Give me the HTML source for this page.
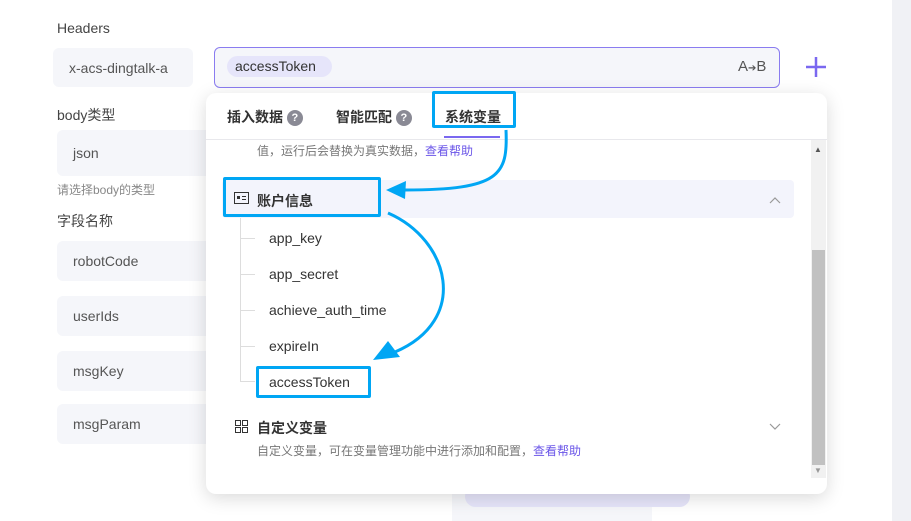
<!DOCTYPE html>
<html><head><meta charset="utf-8"><style>
*{box-sizing:border-box;margin:0;padding:0}
body{width:911px;height:521px;overflow:hidden;background:#fff;font-family:"Liberation Sans","Noto Sans CJK SC",sans-serif;position:relative;color:#333}
.a{position:absolute}
.lbl{font-size:14px;color:#444}
.box{background:#f5f6fa;border-radius:6px;font-size:14px;color:#555;padding-left:16px;display:flex;align-items:center}
.item{position:absolute;left:269px;font-size:14px;color:#333}
.tick{position:absolute;left:241px;width:14px;height:1px;background:#ddd}
</style></head><body>
<div class="a" style="left:892px;top:0;width:19px;height:521px;background:#f0f1f5"></div>
<div class="a lbl" style="left:57px;top:20px">Headers</div>
<div class="a box" style="left:53px;top:48px;width:140px;height:39px;font-size:14px">x-acs-dingtalk-a</div>
<div class="a" style="left:214px;top:47px;width:566px;height:41px;border:1px solid #8a7cf0;border-radius:6px;background:#f5f6fa"></div>
<div class="a" style="left:227px;top:56px;width:105px;height:21px;border-radius:11px;background:#e6e5fa;font-size:14px;color:#333;padding-left:8px;line-height:21px">accessToken</div>
<div class="a" style="left:738px;top:58px;font-size:15px;color:#555">A<span style="font-size:10px">➔</span>B</div>
<svg class="a" style="left:805px;top:56px" width="22" height="22"><path d="M11 1V21M1 11H21" stroke="#7a68f0" stroke-width="2.5"/></svg>
<div class="a lbl" style="left:57px;top:105px">body类型</div>
<div class="a box" style="left:57px;top:130px;width:160px;height:46px">json</div>
<div class="a" style="left:57px;top:181px;font-size:12px;color:#888">请选择body的类型</div>
<div class="a lbl" style="left:57px;top:211px">字段名称</div>
<div class="a box" style="left:57px;top:241px;width:160px;height:40px">robotCode</div>
<div class="a box" style="left:57px;top:296px;width:160px;height:40px">userIds</div>
<div class="a box" style="left:57px;top:351px;width:160px;height:40px">msgKey</div>
<div class="a box" style="left:57px;top:404px;width:160px;height:40px">msgParam</div>
<div class="a" style="left:452px;top:494px;width:200px;height:27px;background:#f5f6fa"></div>
<div class="a" style="left:465px;top:486px;width:225px;height:21px;border-radius:11px;background:#e6e5fa"></div>
<!-- popup -->
<div class="a" style="left:206px;top:93px;width:621px;height:401px;background:#fff;border-radius:10px;box-shadow:0 4px 18px rgba(0,0,0,.15)">
</div>
<div class="a" style="left:206px;top:139px;width:621px;height:1px;background:#e8e8ec"></div>
<div class="a" style="left:227px;top:107px;font-size:14px;font-weight:bold;color:#333">插入数据 <span style="display:inline-block;width:16px;height:16px;border-radius:50%;background:#8a8a95;color:#fff;font-size:11px;text-align:center;line-height:16px;vertical-align:1px">?</span></div>
<div class="a" style="left:336px;top:107px;font-size:14px;font-weight:bold;color:#333">智能匹配 <span style="display:inline-block;width:16px;height:16px;border-radius:50%;background:#8a8a95;color:#fff;font-size:11px;text-align:center;line-height:16px;vertical-align:1px">?</span></div>
<div class="a" style="left:445px;top:107px;font-size:14px;font-weight:bold;color:#333">系统变量</div>
<div class="a" style="left:444px;top:136px;width:56px;height:2px;background:#7a68f0"></div>
<div class="a" style="left:257px;top:142px;font-size:12px;color:#777">值，运行后会替换为真实数据，<span style="color:#6a55e8">查看帮助</span></div>
<div class="a" style="left:811px;top:140px;width:15px;height:338px;background:#f1f1f1"></div>
<div class="a" style="left:812px;top:250px;width:13px;height:215px;background:#c1c1c1"></div>
<div class="a" style="left:814px;top:145px;font-size:8px;color:#555">▲</div>
<div class="a" style="left:814px;top:466px;font-size:8px;color:#999">▼</div>
<div class="a" style="left:222px;top:180px;width:572px;height:38px;background:#f3f4fc;border-radius:4px"></div>
<svg class="a" style="left:234px;top:192px" width="15" height="12"><rect x="0.5" y="0.5" width="14" height="11" fill="none" stroke="#333"/><rect x="3" y="4" width="3" height="3" fill="#333"/><line x1="8" y1="4.5" x2="12" y2="4.5" stroke="#333"/><line x1="8" y1="7.5" x2="12" y2="7.5" stroke="#333"/></svg>
<div class="a" style="left:257px;top:191px;font-size:14px;font-weight:bold;color:#333">账户信息</div>
<svg class="a" style="left:769px;top:196px" width="12" height="8"><path d="M1 7L6 2L11 7" fill="none" stroke="#999" stroke-width="1.2"/></svg>
<div class="a" style="left:240px;top:218px;width:1px;height:164px;background:#ddd"></div>
<div class="tick" style="top:238px"></div><div class="tick" style="top:274px"></div><div class="tick" style="top:310px"></div><div class="tick" style="top:346px"></div><div class="tick" style="top:381px"></div>
<div class="item" style="top:230px">app_key</div>
<div class="item" style="top:266px">app_secret</div>
<div class="item" style="top:302px">achieve_auth_time</div>
<div class="item" style="top:338px">expireIn</div>
<div class="item" style="top:374px">accessToken</div>
<svg class="a" style="left:235px;top:420px" width="13" height="13"><rect x="0.5" y="0.5" width="5" height="5" fill="none" stroke="#333"/><rect x="7.5" y="0.5" width="5" height="5" fill="none" stroke="#333"/><rect x="0.5" y="7.5" width="5" height="5" fill="none" stroke="#333"/><rect x="7.5" y="7.5" width="5" height="5" fill="none" stroke="#333"/></svg>
<div class="a" style="left:257px;top:418px;font-size:14px;font-weight:bold;color:#333">自定义变量</div>
<svg class="a" style="left:769px;top:423px" width="12" height="8"><path d="M1 1L6 6L11 1" fill="none" stroke="#999" stroke-width="1.2"/></svg>
<div class="a" style="left:257px;top:442px;font-size:12px;color:#777">自定义变量，可在变量管理功能中进行添加和配置，<span style="color:#6a55e8">查看帮助</span></div>
<!-- annotations -->
<div class="a" style="left:432px;top:91px;width:84px;height:37px;border:3px solid #00a6f4;border-radius:2px"></div>
<div class="a" style="left:223px;top:177px;width:158px;height:40px;border:3px solid #00a6f4;border-radius:2px"></div>
<div class="a" style="left:256px;top:366px;width:115px;height:32px;border:3px solid #00a6f4;border-radius:2px"></div>
<svg class="a" style="left:0;top:0" width="911" height="521">
<path d="M506 130 C508 175 500 190 405 190" fill="none" stroke="#00a6f4" stroke-width="3"/>
<polygon points="386,190 406,181 405,199" fill="#00a6f4"/>
<path d="M388 213 C450 240 470 320 395 352" fill="none" stroke="#00a6f4" stroke-width="3"/>
<polygon points="373,360 388,341 400,357" fill="#00a6f4"/>
</svg>
</body></html>
